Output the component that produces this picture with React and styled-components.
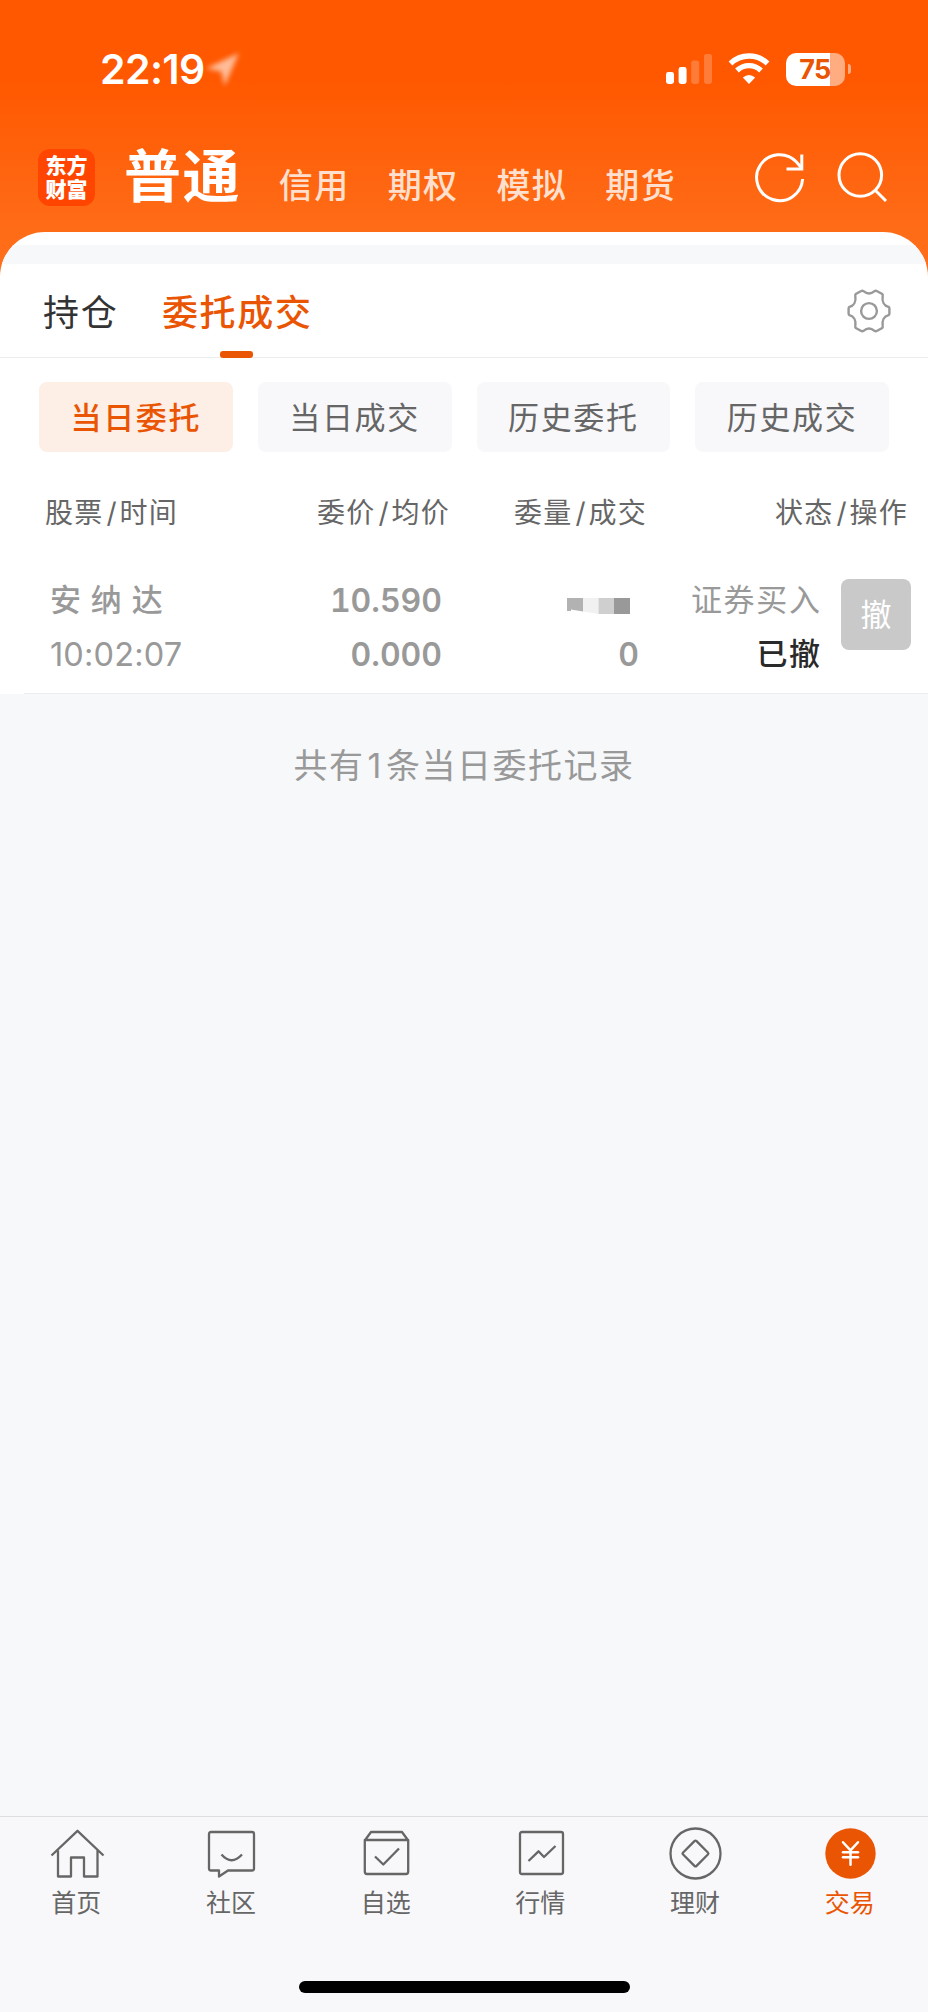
import React from 'react';
import styled, { createGlobalStyle } from 'styled-components';
import { JapaneseYen } from 'lucide-react';

const accounts = ['信用', '期权', '模拟', '期货'];
const filters = ['当日委托', '当日成交', '历史委托', '历史成交'];

const App = () => {
  return (
    <>
      <GlobalStyle />
      <Screen>
        <StatusBar>
          <Time>22:19</Time>
          <LocationArrow viewBox="0 0 40 40">
            <path d="M3 19 L35 4 L21 36 L18 22 Z" fill="#fff" />
          </LocationArrow>
          <StatusIcons>
            <Signal />
            <Wifi />
            <Battery>75</Battery>
            <BatteryTip />
          </StatusIcons>
        </StatusBar>
        <AccountBar>
          <Logo>
            <span>东方</span>
            <span>财富</span>
          </Logo>
          <CurrentAccount>普通</CurrentAccount>
          <Accounts>
            {accounts.map((name) => (
              <Account key={name}>{name}</Account>
            ))}
          </Accounts>
          <HeaderIcons />
        </AccountBar>
        <Panel>
          <Band />
          <Tabs>
            <Tab>持仓</Tab>
            <Tab $active>委托成交</Tab>
            <Gear />
          </Tabs>
          <Filters>
            {filters.map((name, i) => (
              <Filter key={name} $active={i === 0}>{name}</Filter>
            ))}
          </Filters>
          <TableHead>
            <span>股票<i>/</i>时间</span>
            <span>委价<i>/</i>均价</span>
            <span>委量<i>/</i>成交</span>
            <span>状态<i>/</i>操作</span>
          </TableHead>
          <OrderRow>
            <Cell>
              <StockName>安 纳 达</StockName>
              <OrderTime>10:02:07</OrderTime>
            </Cell>
            <Cell $right>
              <Num>10.590</Num>
              <Num>0.000</Num>
            </Cell>
            <Cell $right>
              <Mosaic />
              <Num>0</Num>
            </Cell>
            <Cell $right>
              <Side>证券买入</Side>
              <State>已撤</State>
            </Cell>
            <CancelBtn>撤</CancelBtn>
          </OrderRow>
          <Records>
            <Summary>共有<b>1</b>条当日委托记录</Summary>
          </Records>
          <TabBar>
            <NavItem label="首页">
              <path d="M1.5 26.5 L27.5 1.8 L53.5 26.5 M8 21.5 V47.5 H21 V28.5 H34 V47.5 H47.5 V21.5" />
            </NavItem>
            <NavItem label="社区">
              <path d="M7 3 H48 Q50 3 50 5 V39.5 Q50 41.5 48 41.5 H24 L15 47.5 V41.5 H7 Q5 41.5 5 39.5 V5 Q5 3 7 3 Z M17.5 25.5 Q27.5 37 38 25.5" />
            </NavItem>
            <NavItem label="自选">
              <path d="M5.8 11.5 L12 3 H43 L49.2 11.5 M5.8 11 H49.2 V42.5 Q49.2 45 47 45 H8 Q5.8 45 5.8 42.5 Z M16 27.5 L24.3 35.5 L40 19.5" />
            </NavItem>
            <NavItem label="行情">
              <path d="M8 3 H47 Q49 3 49 5 V43 Q49 45 47 45 H8 Q6 45 6 43 V5 Q6 3 8 3 Z M14.5 32 L24.5 22.3 L30 28 L41.5 17" />
            </NavItem>
            <NavItem label="理财">
              <circle cx="27.5" cy="24.5" r="25" />
              <rect x="18" y="15" width="19" height="19" rx="1.5" transform="rotate(45 27.5 24.5)" />
            </NavItem>
            <NavItem label="交易" active>
              <circle cx="27.5" cy="24.5" r="25.2" fill="#ea5504" stroke="none" />
              <JapaneseYen x="12.5" y="9.5" width="30" height="30" color="#fff" strokeWidth={2} />
            </NavItem>
          </TabBar>
          <HomeArea>
            <HomeIndicator />
          </HomeArea>
        </Panel>
      </Screen>
    </>
  );
};

const NavItem = ({ label, active, children }) => (
  <NavButton $active={active}>
    <NavIcon viewBox="0 0 55 50">{children}</NavIcon>
    <span>{label}</span>
  </NavButton>
);

const Signal = () => (
  <svg width="47" height="32" viewBox="0 0 47 32" fill="#fff">
    <rect x="0" y="19" width="8" height="12" rx="2.4" />
    <rect x="12.6" y="14" width="8" height="17" rx="2.4" />
    <rect x="25.2" y="7.5" width="8" height="23.5" rx="2.4" opacity="0.22" />
    <rect x="38" y="1" width="8" height="30" rx="2.4" opacity="0.22" />
  </svg>
);

const Wifi = () => (
  <WifiSvg width="42" height="32" viewBox="0 0 42 32">
    <path d="M2.5 10.5 A26.5 26.5 0 0 1 39.5 10.5" />
    <path d="M9 17.5 A17.3 17.3 0 0 1 33 17.5" />
    <path d="M21 31 L14.8 24.6 Q21 19.6 27.2 24.6 Z" fill="#fff" stroke="none" />
  </WifiSvg>
);

const HeaderIcons = () => (
  <svg width="138" height="60" viewBox="0 0 138 60" fill="none" stroke="#fff" strokeWidth="3">
    <path d="M52.6 31 A23 23 0 1 1 46.5 14 L52 20.5" />
    <path d="M51.8 6.5 V21 H36.5" />
    <circle cx="110.3" cy="27" r="21.3" />
    <path d="M125 42 L136 53" />
  </svg>
);

const Gear = () => (
  <GearSvg width="46" height="46" viewBox="-23 -23 46 46">
    <path d="M-5.5 -19.8 Q0 -15.2 5.5 -19.8 Q6.7 -20.7 8.2 -19.8 L13.2 -17 Q14 -16.3 13.7 -15 C12.8 -9.5 15.2 -5.3 19.5 -4.2 Q20.4 -3.5 20.4 -2.5 V2.5 Q20.4 3.5 19.5 4.2 C15.2 5.3 12.8 9.5 13.7 15 Q14 16.3 13.2 17 L8.2 19.8 Q6.7 20.7 5.5 19.8 Q0 15.2 -5.5 19.8 Q-6.7 20.7 -8.2 19.8 L-13.2 17 Q-14 16.3 -13.7 15 C-12.8 9.5 -15.2 5.3 -19.5 4.2 Q-20.4 3.5 -20.4 2.5 V-2.5 Q-20.4 -3.5 -19.5 -4.2 C-15.2 -5.3 -12.8 -9.5 -13.7 -15 Q-14 -16.3 -13.2 -17 L-8.2 -19.8 Q-6.7 -20.7 -5.5 -19.8 Z" />
    <circle r="7.9" />
  </GearSvg>
);

const Mosaic = () => (
  <MosaicSvg width="63" height="44" viewBox="0 0 63 44">
    <path d="M0 15 H16 V28.5 L4 26.5 V28 H0 Z" fill="#b2b2b2" />
    <path d="M16 15 H31.5 V31 L16 28.5 Z" fill="#f1f1f1" />
    <rect x="31.5" y="15" width="15.5" height="16" fill="#cfcfcf" />
    <rect x="47" y="15" width="16" height="16" fill="#999" />
  </MosaicSvg>
);

const GlobalStyle = createGlobalStyle`
  * {
    box-sizing: border-box;
  }
  body {
    margin: 0;
    font-family: Inter, "Noto Sans CJK SC", sans-serif;
  }
  svg {
    display: block;
    flex: none;
  }
`;

const Screen = styled.div`
  width: 928px;
  height: 2012px;
  display: flex;
  flex-direction: column;
  overflow: hidden;
  background: linear-gradient(#ff5800 0, #ff5800 80px, #ff6c18 231px, #ff701c 290px);
`;

const StatusBar = styled.div`
  height: 138px;
  flex: none;
  display: flex;
  align-items: center;
  padding: 0 77px 0 100px;
  color: #fff;
`;

const Time = styled.div`
  font-size: 41px;
  font-weight: 600;
  letter-spacing: -0.6px;
  width: 103px;
`;

const LocationArrow = styled.svg`
  width: 41px;
  height: 41px;
  opacity: 0.6;
  filter: blur(2.4px);
`;

const StatusIcons = styled.div`
  display: flex;
  align-items: center;
  margin-left: auto;
`;

const WifiSvg = styled.svg`
  margin: 0 16px 0 15px;
  fill: none;
  stroke: #fff;
  stroke-width: 5.4;
`;

const Battery = styled.div`
  width: 59px;
  height: 33px;
  line-height: 33px;
  padding-right: 1px;
  border-radius: 10px;
  background: linear-gradient(90deg, #fff 44px, rgba(255, 255, 255, 0.5) 44px);
  color: #ea5504;
  font-size: 27px;
  font-weight: 700;
  letter-spacing: -0.6px;
  text-align: center;
`;

const BatteryTip = styled.div`
  width: 3px;
  height: 10px;
  margin-left: 3px;
  border-radius: 0 4px 4px 0;
  background: rgba(255, 255, 255, 0.5);
`;

const AccountBar = styled.div`
  height: 94px;
  flex: none;
  display: flex;
  align-items: flex-start;
  padding: 10px 0 0 38px;
  color: #fff;
  > svg {
    margin-left: 74px;
  }
`;

const Logo = styled.div`
  width: 57px;
  height: 57px;
  margin-top: 1px;
  padding-top: 5px;
  border-radius: 12px;
  background: #ff4500;
  display: flex;
  flex-direction: column;
  align-items: center;
  font-size: 21px;
  font-weight: 900;
  line-height: 23.5px;
`;

const CurrentAccount = styled.div`
  margin-left: 29px;
  font-size: 57px;
  font-weight: 700;
  line-height: 57px;
  letter-spacing: 1.4px;
`;

const Accounts = styled.div`
  display: flex;
  gap: 38px;
  margin: 16px 0 0 38px;
`;

const Account = styled.div`
  color: #ffe0cf;
  font-size: 34px;
  font-weight: 500;
  line-height: 44px;
  letter-spacing: 1.4px;
`;

const Panel = styled.div`
  flex: 1;
  display: flex;
  flex-direction: column;
  padding-top: 13px;
  background: #fff;
  border-radius: 45px 45px 0 0;
  overflow: hidden;
`;

const Band = styled.div`
  height: 19px;
  flex: none;
  background: #f7f8fa;
`;

const Tabs = styled.div`
  height: 94px;
  flex: none;
  display: flex;
  align-items: stretch;
  gap: 43.5px;
  padding: 0 36px 0 43px;
  border-bottom: 1px solid #ececec;
`;

const Tab = styled.div`
  display: flex;
  flex-direction: column;
  align-items: center;
  line-height: 98px;
  font-size: 36px;
  letter-spacing: 1.7px;
  font-weight: ${(p) => (p.$active ? 500 : 400)};
  color: ${(p) => (p.$active ? '#ea5504' : '#333')};
  &::after {
    content: '';
    display: ${(p) => (p.$active ? 'block' : 'none')};
    width: 33px;
    height: 7px;
    flex: none;
    margin: -11px 2px 0 0;
    border-radius: 3px;
    background: #ea5504;
  }
`;

const GearSvg = styled.svg`
  align-self: center;
  margin-left: auto;
  fill: none;
  stroke: #999;
  stroke-width: 2.4;
`;

const Filters = styled.div`
  flex: none;
  display: grid;
  grid-template-columns: repeat(4, 1fr);
  gap: 25px;
  padding: 24px 39px 0;
`;

const Filter = styled.div`
  height: 70px;
  line-height: 72px;
  border-radius: 8px;
  text-align: center;
  font-size: 31px;
  letter-spacing: 1.7px;
  font-weight: ${(p) => (p.$active ? 500 : 400)};
  color: ${(p) => (p.$active ? '#ea5504' : '#666')};
  background: ${(p) => (p.$active ? '#fdeee6' : '#f8f8fa')};
`;

const TableHead = styled.div`
  flex: none;
  display: grid;
  grid-template-columns: 205px 200px 197px 261px;
  padding: 0 20px 0 45px;
  height: 122px;
  line-height: 122px;
  font-size: 28px;
  letter-spacing: 1.3px;
  color: #666;
  text-align: right;
  span:first-child {
    text-align: left;
  }
  i {
    font-style: normal;
    margin: 0 1.5px 0 3px;
  }
`;

const OrderRow = styled.div`
  flex: none;
  height: 120px;
  display: grid;
  grid-template-columns: 200px 192px 197px 181px 92px;
  padding-left: 50px;
  color: #999;
  /* the divider starts after the left inset */
  background: linear-gradient(#ececec, #ececec) 24px 100% / 100% 1px no-repeat;
`;

const Cell = styled.div`
  display: flex;
  flex-direction: column;
  line-height: 54px;
  font-size: 31px;
  align-items: ${(p) => (p.$right ? 'flex-end' : 'flex-start')};
`;

const StockName = styled.div`
  height: 54px;
  line-height: 52px;
  font-weight: 500;
  word-spacing: 1.6px;
`;

const OrderTime = styled.div`
  font-size: 32.5px;
  line-height: 53px;
  letter-spacing: 0.15px;
`;

const Num = styled.div`
  font-size: 32px;
  font-weight: 600;
  line-height: 53.5px;
  font-variant-numeric: tabular-nums;
`;

const MosaicSvg = styled.svg`
  margin: 9px 9px 1px 0;
`;

const Side = styled.div`
  height: 54px;
  line-height: 52px;
  letter-spacing: 1.7px;
  margin-right: -1.7px;
`;

const State = styled.div`
  line-height: 52px;
  letter-spacing: 1.4px;
  margin-right: -1.4px;
  font-weight: 500;
  color: #2a2a2a;
`;

const CancelBtn = styled.div`
  width: 70px;
  height: 71px;
  margin: 5px 0 0 21px;
  line-height: 72px;
  border-radius: 8px;
  background: #c9c9c9;
  color: #fff;
  font-size: 31px;
  text-align: center;
`;

const Records = styled.div`
  flex: 1;
  padding-top: 47px;
  background: #f7f8fa;
  text-align: center;
`;

const Summary = styled.div`
  font-size: 34px;
  line-height: 50px;
  letter-spacing: 1.5px;
  color: #999;
  b {
    font-weight: 400;
    margin: 0 3px;
  }
`;

const TabBar = styled.div`
  height: 126px;
  flex: none;
  display: grid;
  grid-template-columns: repeat(6, 1fr);
  border-top: 1px solid #dedee0;
  background: #f8f8fa;
`;

const NavButton = styled.div`
  display: flex;
  flex-direction: column;
  align-items: center;
  padding-top: 12px;
  font-size: 25px;
  line-height: 36px;
  color: ${(p) => (p.$active ? '#ea5504' : '#666')};
  span {
    margin: 6px 2px 0 0;
  }
`;

const NavIcon = styled.svg`
  width: 55px;
  height: 50px;
  overflow: visible;
  fill: none;
  stroke: #666;
  stroke-width: 2.3;
  stroke-linejoin: round;
`;

const HomeArea = styled.div`
  height: 70px;
  flex: none;
  display: flex;
  justify-content: center;
  padding-top: 39px;
  background: #f8f8fa;
`;

const HomeIndicator = styled.div`
  width: 331px;
  height: 12px;
  border-radius: 6px;
  background: #000;
`;

export default App;
